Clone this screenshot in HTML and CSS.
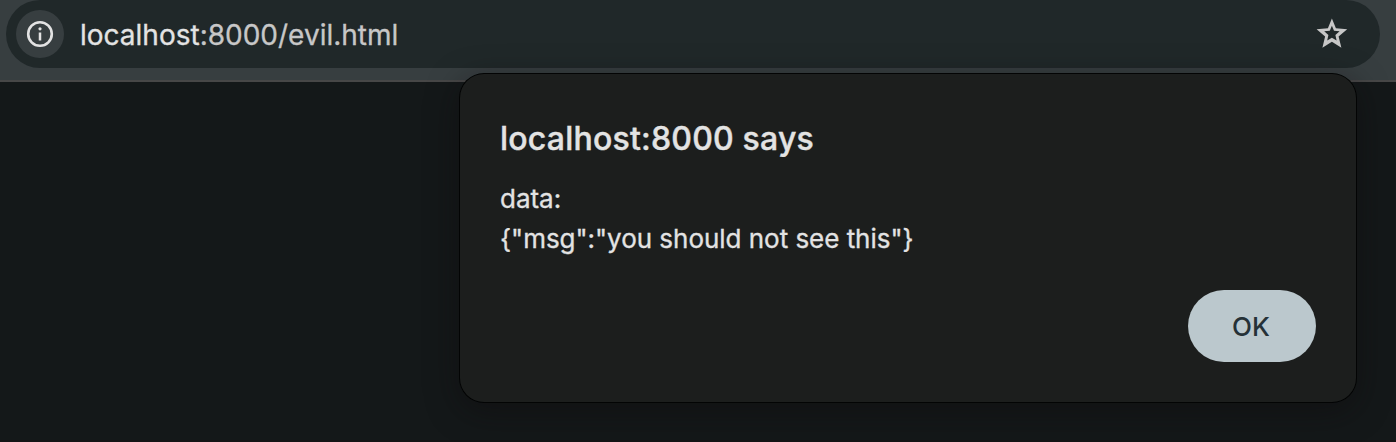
FILE: index.html
```html
<!DOCTYPE html>
<html lang="en">
<head>
<meta charset="utf-8">
<title>localhost:8000/evil.html</title>
<link rel="stylesheet" href="styles.css">
</head>
<body>
<header class="toolbar">
  <div class="omnibox">
    <span class="site-info">
      <svg width="28" height="28" viewBox="0 0 28 28"><circle cx="14" cy="14" r="11.8" fill="none" stroke="#e3e3e3" stroke-width="2.6"/><path d="M14 12.5V20.5" stroke="#e3e3e3" stroke-width="2.5"/><circle cx="14" cy="8.8" r="1.6" fill="#e3e3e3"/></svg>
    </span>
    <div class="url"><span class="host">localhost</span>:8000/evil.html</div>
    <svg class="star" width="32" height="32" viewBox="0 1.6 32 32"><path fill="#c7c7c7" fill-rule="evenodd" d="M15.9 2.2L19.9 11.9L31.2 12.8L22.6 20L25.4 31.4L15.9 25.4L6.4 31.4L9.1 20L.6 12.8L11.9 11.9ZM15.9 9.4L13.8 14.4L8.2 14.9L12.4 18.6L11.2 24.2L15.9 21.3L20.6 24.2L19.4 18.6L23.6 14.9L18 14.4Z"/></svg>
  </div>
</header>
<main class="page"></main>
<section class="dialog" role="alertdialog">
  <h1 class="title">localhost:8000 says</h1>
  <p class="message"><span class="label">data:</span><br>{"msg":"you should not see this"}</p>
  <button class="ok">OK</button>
</section>
</body>
</html>
```
FILE: styles.css
```css
* { box-sizing: border-box; }
body {
  margin: 0;
  height: 442px;
  overflow: hidden;
  display: flex;
  flex-direction: column;
  background: #141819;
  font-family: Inter, "Liberation Sans", sans-serif;
}
.toolbar {
  height: 82px;
  padding: 0 16px 0 6px;
  background: #373e40;
  border-bottom: 2px solid #474747;
}
.omnibox {
  height: 68px;
  padding: 0 32px 0 10px;
  display: flex;
  align-items: center;
  border-radius: 34px;
  background: #202829;
}
.site-info {
  width: 48px;
  height: 48px;
  margin-right: 16px;
  display: flex;
  align-items: center;
  justify-content: center;
  border-radius: 50%;
  background: #373e40;
}
.url {
  flex: 1;
  padding-top: 1px;
  font-size: 28px;
  line-height: 40px;
  color: #c7c7c7;
  -webkit-text-stroke: 0.3px currentColor;
}
.host { color: #e3e3e3; }
.page { flex: 1; border-bottom: 2px solid #141415; }
.dialog {
  position: absolute;
  left: 460px;
  top: 74px;
  width: 896px;
  height: 328px;
  padding: 45px 40px 40px;
  display: flex;
  flex-direction: column;
  border-radius: 24px;
  background: #1c1e1d;
  color: #e3e3e3;
  box-shadow: 0 0 0 1px #030404, 0 8px 32px rgba(14, 10, 12, 0.5);
}
.title {
  margin: 0 0 20px;
  font-size: 32px;
  line-height: 40px;
  font-weight: 500;
  letter-spacing: 0.21px;
  -webkit-text-stroke: 0.4px currentColor;
}
.message {
  margin: 0;
  font-size: 26px;
  letter-spacing: -0.03px;
  line-height: 40px;
  -webkit-text-stroke: 0.3px currentColor;
}
.ok {
  width: 128px;
  height: 72px;
  margin-top: auto;
  padding: 0 2px 0 0;
  align-self: flex-end;
  border: 0;
  border-radius: 36px;
  background: #bbc8cd;
  color: #253137;
  font: 500 26px Inter, "Liberation Sans", sans-serif;
}
```
